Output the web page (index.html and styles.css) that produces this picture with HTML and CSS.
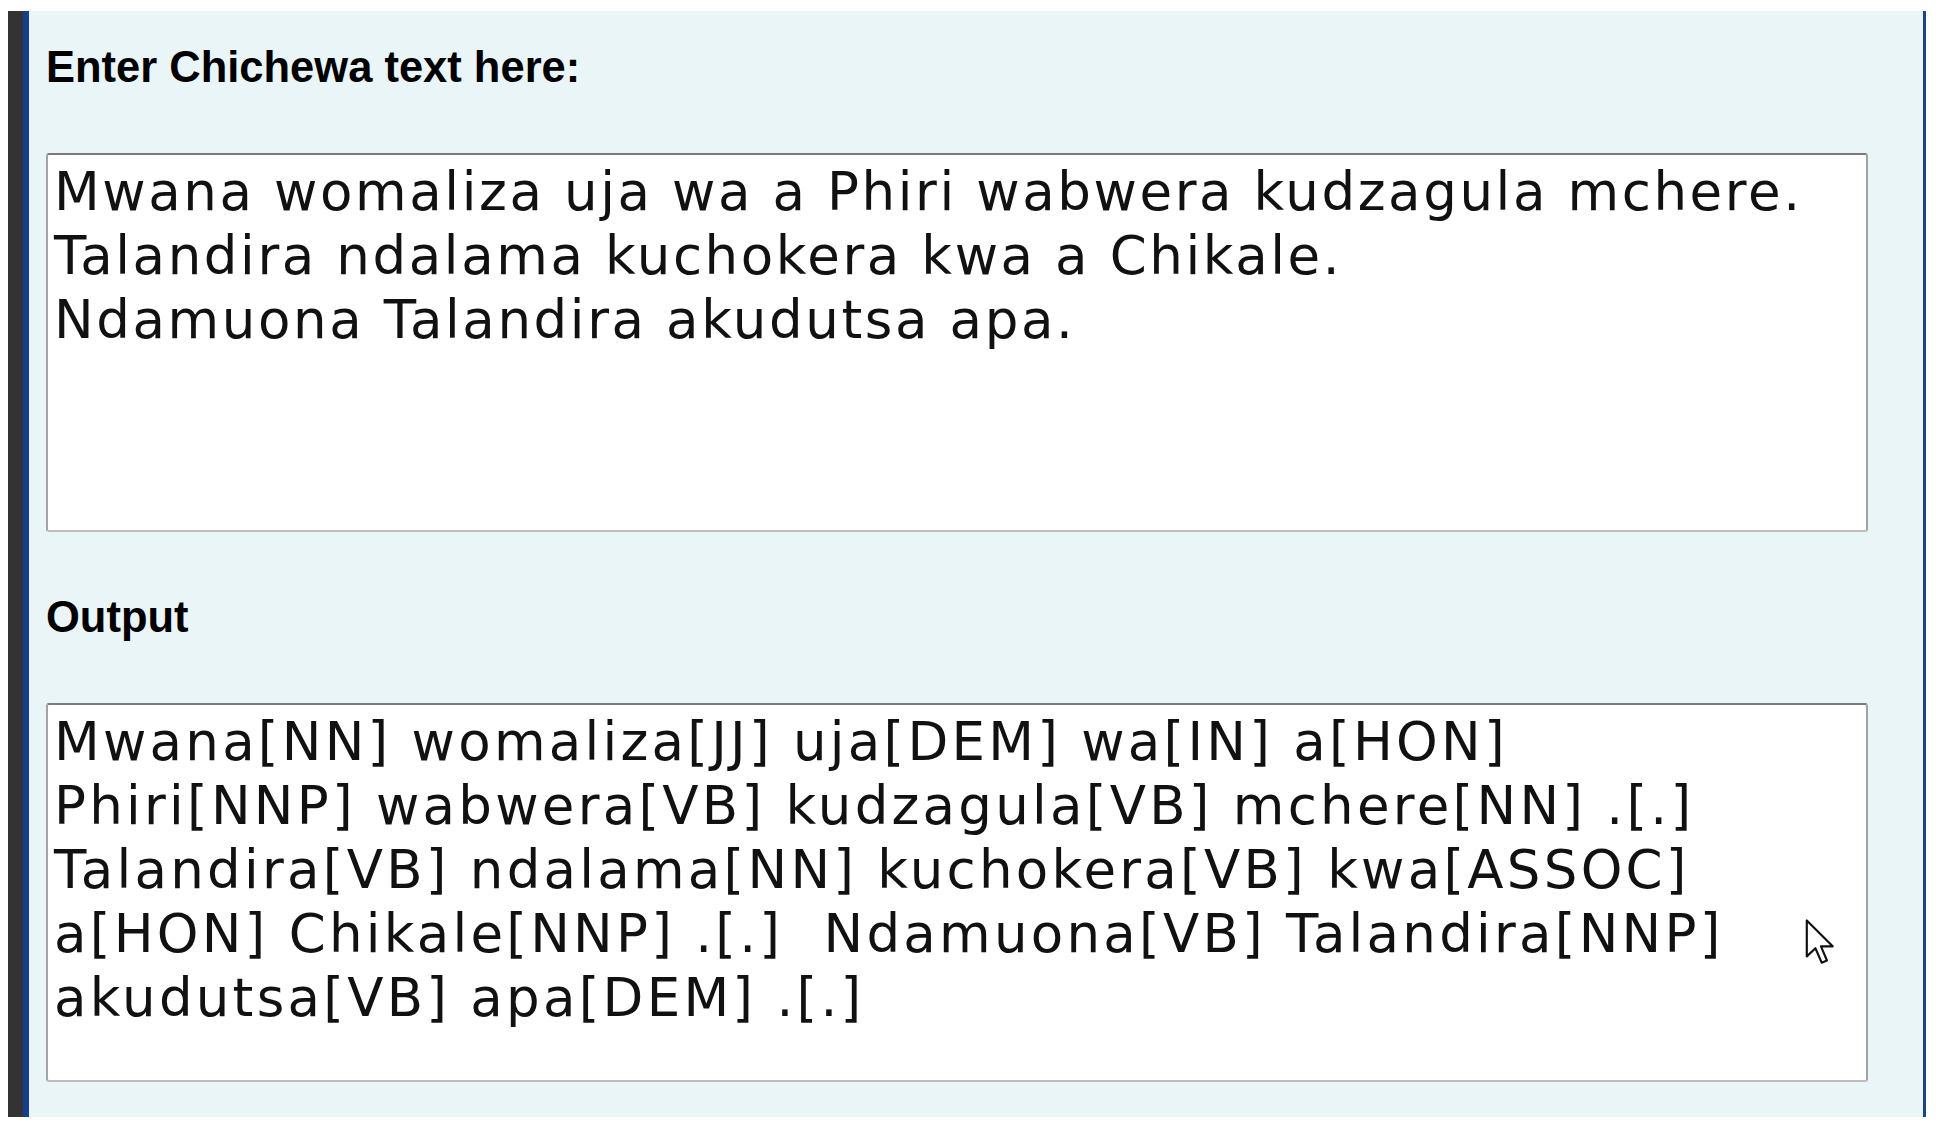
FILE: index.html
```html
<!DOCTYPE html>
<html lang="ny">
<head>
<meta charset="utf-8">
<title>Chichewa POS Tagger</title>
<link rel="stylesheet" href="styles.css">
</head>
<body>
<div class="frame">
  <div class="panel">
    <label class="field-label" for="input">Enter Chichewa text here:</label>
    <textarea id="input" class="box box-input" spellcheck="false">Mwana womaliza uja wa a Phiri wabwera kudzagula mchere.
Talandira ndalama kuchokera kwa a Chikale.
Ndamuona Talandira akudutsa apa.</textarea>
    <label class="field-label" for="output">Output</label>
    <textarea id="output" class="box box-output" spellcheck="false" readonly>Mwana[NN] womaliza[JJ] uja[DEM] wa[IN] a[HON]
Phiri[NNP] wabwera[VB] kudzagula[VB] mchere[NN] .[.]
Talandira[VB] ndalama[NN] kuchokera[VB] kwa[ASSOC]
a[HON] Chikale[NNP] .[.]  Ndamuona[VB] Talandira[NNP]
akudutsa[VB] apa[DEM] .[.]</textarea>
  </div>
</div>
<svg class="pointer" width="32" height="48" viewBox="0 0 13 20" aria-hidden="true">
  <path d="M1 1 L1 16 L4.6 12.6 L7.2 18.6 L9.4 17.7 L6.9 11.8 L11.8 11.8 Z" fill="#fff" stroke="#111" stroke-width="0.9" stroke-linejoin="round"/>
</svg>
</body>
</html>
```

FILE: styles.css
```css
html, body {
  margin: 0;
  padding: 0;
  background: #ffffff;
}

body {
  padding: 11px 0 0 8px;
  height: 1140px;
  box-sizing: border-box;
  position: relative;
  overflow: hidden;
}

.frame {
  width: 1918px;
  border-left: 15px solid #333333;
  box-sizing: border-box;
}

.panel {
  background: #e9f5f7;
  border-left: 6px solid #143f88;
  border-right: 3px solid #1d4586;
  padding: 31px 0 35px 17px;
  display: flex;
  flex-direction: column;
  align-items: flex-start;
}

.field-label {
  font-family: "Liberation Sans", Arial, sans-serif;
  font-weight: bold;
  font-size: 43.5px;
  line-height: 50px;
  color: #000;
  height: 50px;
  margin-bottom: 61px;
}

.box {
  width: 1822px;
  height: 379px;
  box-sizing: border-box;
  margin: 0 0 60px 0;
  border: 2px solid;
  border-color: #7a7a7a #a3a3a3 #bdbdbd #a3a3a3;
  border-radius: 3px;
  background: #ffffff;
  padding: 5px 6px;
  font-family: "DejaVu Sans", sans-serif;
  font-size: 53px;
  letter-spacing: 2.8px;
  line-height: 64px;
  color: #111;
  resize: none;
  overflow: hidden;
  outline: none;
  white-space: pre-wrap;
}

.box-input {
  letter-spacing: 2.6px;
}

.box-output {
  letter-spacing: 3.25px;
}

.box:last-child {
  margin-bottom: 0;
}

.pointer {
  position: absolute;
  left: 1804px;
  top: 918px;
}
```
